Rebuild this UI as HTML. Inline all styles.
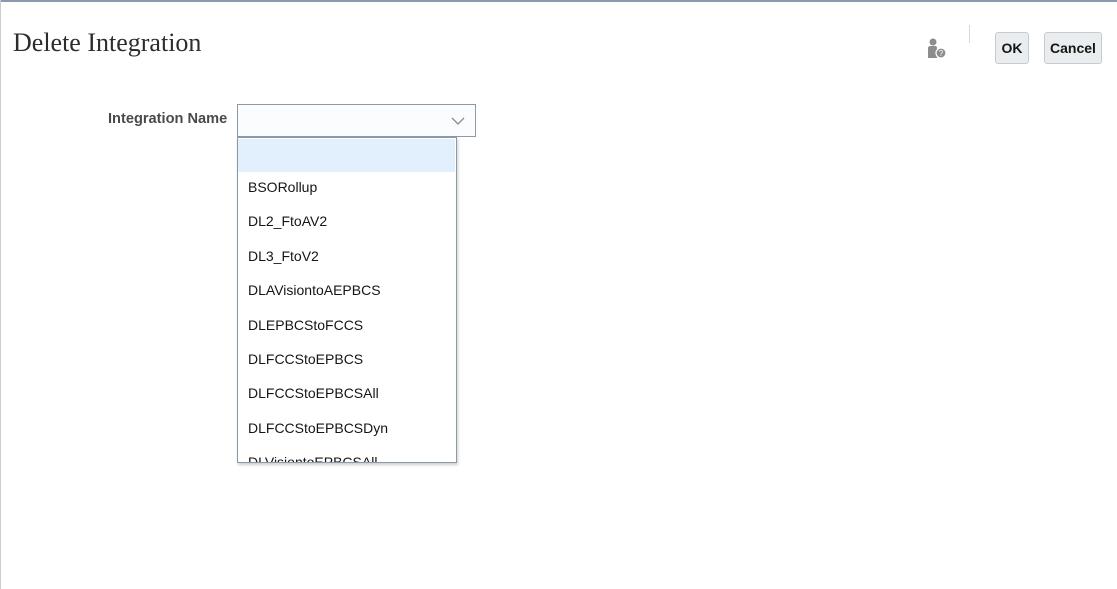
<!DOCTYPE html>
<html><head><style>
body{margin:0;width:1117px;height:589px;background:#fff;position:relative;overflow:hidden;font-family:"Liberation Sans",sans-serif;}
.top{position:absolute;left:0;top:0;width:1117px;height:2px;background:#8a9bab;}
.left{position:absolute;left:0;top:0;width:1px;height:589px;background:#c9ced3;}
h1{position:absolute;left:13px;top:28px;margin:0;font:400 26px "Liberation Serif",serif;color:#2d2d2d;}
.sep{position:absolute;left:969px;top:25px;width:1px;height:18px;background:#d6d9dc;}
.btn{position:absolute;top:32px;height:32px;border:1px solid #c7ccd1;border-radius:3px;background:#e9edf0;font-weight:bold;font-size:14px;color:#161513;line-height:30px;text-align:center;box-sizing:border-box;}
.lbl{position:absolute;left:108px;top:111px;font-weight:bold;font-size:14.6px;color:#4a4a4a;}
.sel{position:absolute;left:237px;top:104px;width:239px;height:33px;box-sizing:border-box;border:1px solid #8b9aa7;background:#fbfcfd;}
.dd{position:absolute;left:237px;top:137px;width:220px;height:326px;box-sizing:border-box;border:1px solid #8b9aa7;background:#fff;overflow:hidden;box-shadow:1px 2px 3px rgba(0,0,0,.2);}
.row{height:34.4px;line-height:30.5px;padding-left:10px;font-size:14px;color:#161513;}
.hl{background:#e2effc;width:207px;margin-top:1px;height:33px;}
</style></head><body>
<div class="top"></div><div class="left"></div>
<h1>Delete Integration</h1>
<svg style="position:absolute;left:926px;top:37px" width="22" height="22" viewBox="0 0 22 22">
<circle cx="7" cy="5" r="3.5" fill="#8d8d8d"/><path d="M2 11 Q2 9 5 9 H9 Q11 9 11 11 V21 H2Z" fill="#8d8d8d"/>
<circle cx="15" cy="16" r="5" fill="#8d8d8d" stroke="#fff" stroke-width="1.2"/>
<text x="15" y="19" font-size="8" text-anchor="middle" fill="#fff" font-family="Liberation Sans">?</text></svg>
<div class="sep"></div>
<div class="btn" style="left:995px;width:34px">OK</div>
<div class="btn" style="left:1044px;width:58px">Cancel</div>
<div class="lbl">Integration Name</div>
<div class="sel"><svg style="position:absolute;left:213px;top:12px" width="14" height="9"><path d="M1 1 L7 7 L13 1" fill="none" stroke="#8a8a8a" stroke-width="1.3"/></svg></div>
<div class="dd">
<div class="row hl"></div>
<div class="row">BSORollup</div>
<div class="row">DL2_FtoAV2</div>
<div class="row">DL3_FtoV2</div>
<div class="row">DLAVisiontoAEPBCS</div>
<div class="row">DLEPBCStoFCCS</div>
<div class="row">DLFCCStoEPBCS</div>
<div class="row">DLFCCStoEPBCSAll</div>
<div class="row">DLFCCStoEPBCSDyn</div>
<div class="row">DLVisiontoEPBCSAll</div>
</div>
</body></html>
